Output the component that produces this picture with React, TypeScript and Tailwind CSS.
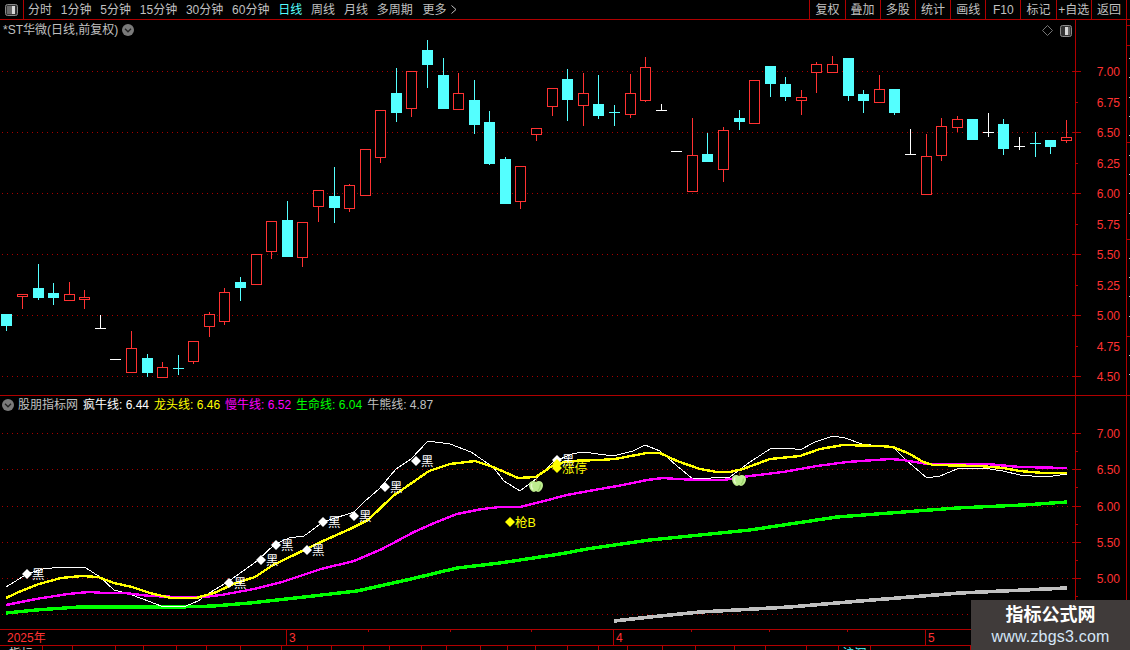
import React from "react";

type C = [number, number, number, number, number, "r" | "c" | "w"];
const candles: C[] = [
  [6, 314, 314, 325, 331, "c"], [22, 294, 294, 296, 309, "r"], [38, 264, 288, 297, 300, "c"], [53, 283, 293, 297, 305, "c"],
  [69, 282, 294, 300, 300, "r"], [84, 290, 297, 299, 309, "r"], [100, 315, 328, 328, 328, "w"], [115, 359, 359, 359, 359, "w"],
  [131, 331, 348, 372, 372, "r"], [147, 354, 358, 372, 377, "c"], [162, 362, 367, 377, 377, "r"], [178, 355, 368, 368, 375, "c"],
  [193, 341, 341, 361, 364, "r"], [209, 312, 314, 326, 337, "r"], [224, 288, 292, 321, 325, "r"], [240, 277, 282, 287, 301, "c"],
  [256, 254, 254, 284, 284, "r"], [271, 221, 221, 251, 259, "r"], [287, 201, 220, 256, 256, "c"], [302, 222, 222, 257, 267, "r"],
  [318, 190, 190, 206, 222, "r"], [334, 167, 196, 207, 223, "c"], [349, 184, 185, 208, 212, "r"], [365, 149, 149, 195, 195, "r"],
  [380, 110, 110, 157, 163, "r"], [396, 68, 93, 112, 122, "c"], [411, 71, 71, 108, 117, "r"], [427, 40, 50, 64, 88, "c"],
  [443, 58, 75, 108, 108, "c"], [458, 73, 93, 109, 109, "r"], [474, 80, 100, 124, 134, "c"], [489, 111, 122, 163, 165, "c"],
  [505, 157, 159, 203, 203, "c"], [520, 166, 166, 201, 209, "r"], [536, 128, 128, 134, 141, "r"], [552, 88, 88, 106, 116, "r"],
  [567, 69, 79, 99, 121, "c"], [583, 73, 93, 105, 126, "r"], [598, 75, 104, 115, 119, "c"], [614, 105, 112, 112, 126, "c"],
  [630, 74, 93, 114, 118, "r"], [645, 57, 67, 100, 102, "r"], [661, 104, 110, 110, 110, "w"], [676, 151, 151, 151, 151, "w"],
  [692, 118, 155, 191, 191, "r"], [707, 133, 154, 161, 162, "c"], [723, 127, 130, 169, 182, "r"], [739, 110, 118, 121, 130, "c"],
  [754, 80, 80, 123, 123, "r"], [770, 66, 66, 83, 97, "c"], [785, 77, 84, 96, 101, "c"], [801, 90, 97, 100, 115, "r"],
  [816, 62, 64, 72, 93, "r"], [832, 56, 64, 72, 72, "r"], [848, 58, 58, 95, 101, "c"], [863, 90, 94, 100, 113, "c"],
  [879, 75, 89, 102, 102, "r"], [894, 89, 89, 112, 115, "c"], [910, 129, 154, 154, 154, "w"], [926, 134, 156, 194, 194, "r"],
  [941, 118, 126, 155, 161, "r"], [957, 116, 119, 127, 132, "r"], [972, 119, 119, 139, 140, "c"], [988, 113, 132, 132, 137, "w"],
  [1003, 119, 124, 148, 155, "c"], [1019, 137, 146, 146, 150, "w"], [1035, 132, 143, 143, 157, "c"], [1050, 140, 140, 146, 154, "c"],
  [1066, 120, 137, 140, 143, "r"],
];

const white = "6,588 27,575 43,570 62,568 86,569 100,578 114,591 129,595 143,600 161,607 186,607 198,602 211,593 229,582 257,562 275,545 289,539 304,537 323,523 354,513 364,503 379,490 396,470 411,460 428,442 450,445 471,453 493,468 504,482 520,492 536,480 553,463 572,455 583,453 613,457 633,452 645,446 660,452 677,467 693,480 730,478 750,463 770,450 790,449 800,451 815,443 833,437 845,439 862,445 880,447 893,448 907,462 927,479 940,477 957,470 983,469 1003,472 1020,476 1043,478 1053,477 1067,475";
const yellow = "6,599 21,592 39,585 61,579 82,577 98,578 114,584 132,588 150,594 171,599 196,599 214,594 236,584 255,578 273,566 296,555 323,542 350,530 368,521 393,497 429,472 450,465 475,462 493,468 518,479 536,478 552,467 567,462 600,461 615,460 647,454 660,454 677,462 700,470 717,473 730,473 743,470 770,460 800,457 820,450 843,446 880,447 893,448 910,455 923,463 933,466 980,467 1003,469 1020,472 1043,474 1067,474";
const magenta = "6,606 36,600 68,595 89,593 104,594 125,594 150,597 179,598 204,598 221,596 254,590 282,583 321,570 354,562 382,550 414,533 432,525 457,515 482,510 500,508 520,508 540,503 567,496 600,490 623,486 647,481 663,479 677,480 700,481 723,481 750,477 783,473 817,467 847,463 890,460 903,461 927,465 987,465 1020,468 1067,469";
const green = "6,614 36,611 79,608 179,608 214,607 250,604 304,598 357,592 411,580 457,569 500,564 560,555 587,550 650,541 700,536 750,531 790,525 837,518 890,514 957,509 1023,506 1067,503";
const gray = "614,622 650,618 700,613 790,608 860,602 960,594 1067,589";

const blackMarks: [number, number][] = [[27, 575], [229, 584], [261, 561], [276, 546], [307, 551], [323, 523], [354, 517], [385, 488], [416, 462], [557, 461]];
const upperLabels: [string, number, boolean][] = [
  ["7.00", 71, true], ["6.75", 102, false], ["6.50", 132, true], ["6.25", 163, false], ["6.00", 193, true], ["5.75", 224, false],
  ["5.50", 254, true], ["5.25", 285, false], ["5.00", 315, true], ["4.75", 346, false], ["4.50", 376, true],
];
const lowerLabels: [string, number][] = [["7.00", 434], ["6.50", 470], ["6.00", 507], ["5.50", 543], ["5.00", 579]];
const lowerMinor = [452, 488, 525, 561, 597];

const periods: [string, boolean][] = [["分时", false], ["1分钟", false], ["5分钟", false], ["15分钟", false], ["30分钟", false], ["60分钟", false], ["日线", true], ["周线", false], ["月线", false], ["多周期", false]];
const actions = ["复权", "叠加", "多股", "统计", "画线", "F10", "标记", "+自选", "返回"];
const tabEdges = [43, 73, 116, 144, 177, 207, 241, 282, 308, 332, 364, 390, 422, 447, 481, 508, 536, 568, 599, 628, 663, 696, 735, 766, 807, 839, 871, 971];

function Candle({ c }: { c: C }) {
  const [x, h, t, b, l, k] = c;
  const color = k === "r" ? "#ff3232" : k === "c" ? "#54ffff" : "#ffffff";
  const flat = b - t < 1;
  return (
    <g stroke={color} strokeWidth={1} shapeRendering="crispEdges">
      {h < t && <line x1={x + 0.5} x2={x + 0.5} y1={h} y2={t} />}
      {l > b && <line x1={x + 0.5} x2={x + 0.5} y1={b} y2={l} />}
      {flat ? (
        <line x1={x - 5} x2={x + 6} y1={t + 0.5} y2={t + 0.5} />
      ) : (
        <rect x={x - 5 + 0.5} y={t + 0.5} width={10} height={b - t} fill={k === "r" ? "#000" : color} />
      )}
    </g>
  );
}

function Grid({ ys }: { ys: number[] }) {
  return (
    <g stroke="#a80000" strokeWidth={1} strokeDasharray="1 4" shapeRendering="crispEdges">
      {ys.map((y) => (
        <line key={y} x1={2} x2={1074} y1={y + 0.5} y2={y + 0.5} />
      ))}
    </g>
  );
}

function Chevron({ className }: { className: string }) {
  return (
    <svg width="12" height="12" viewBox="0 0 12 12" className={className}>
      <circle cx="6" cy="6" r="6" fill="#7a7a7a" />
      <path d="M3 4.8 L6 7.8 L9 4.8" stroke="#222" strokeWidth="1.3" fill="none" />
    </svg>
  );
}

function Apple({ x, y }: { x: number; y: number }) {
  return (
    <g transform={`translate(${x} ${y})`}>
      <path d="M0 -4 C-2 -6 -7 -5.5 -7 -1 C-7 3 -4 6 -2 6 C-1 6 -0.5 5.3 0 5.3 C0.5 5.3 1 6 2 6 C4 6 7 3 7 -1 C7 -5.5 2 -6 0 -4 Z" fill="#bdec8e" />
      <path d="M-4 -2.5 C-5 -0.5 -4.5 2 -3 3.5" stroke="#e2f8c8" strokeWidth="1.5" fill="none" />
      <path d="M4.5 -1.5 C4.5 1 3.5 3 2 4.5" stroke="#9ad06a" strokeWidth="1.2" fill="none" />
      <path d="M0 -4 L1 -8" stroke="#7a5a20" strokeWidth="1" />
    </g>
  );
}

function Mark({ x, y, label, color }: { x: number; y: number; label: string; color: string }) {
  return (
    <g>
      <path d={`M${x} ${y - 5} L${x + 5} ${y} L${x} ${y + 5} L${x - 5} ${y} Z`} fill={color} />
      <text x={x + 5} y={y + 5} fontSize="12.5" fill={color}>{label}</text>
    </g>
  );
}

export default function App() {
  return (
    <div className="relative flex h-[650px] w-[1130px] flex-col overflow-hidden bg-black font-['Liberation_Sans','Noto_Sans_CJK_SC',sans-serif] text-[12px] text-[#c0c0c0]">
      {/* toolbar */}
      <div className="flex h-[20px] shrink-0 items-center border-b border-[#b00000]">
        <div className="flex h-full w-[24px] items-center justify-center border-r border-[#b00000]">
          <svg width="13" height="12" viewBox="0 0 13 12">
            <rect x="0.5" y="0.5" width="12" height="11" rx="2" fill="#333" stroke="#8a8a8a" />
            <rect x="2" y="2" width="5" height="8" fill="#6a6a6a" />
            <rect x="7" y="2" width="3" height="8" fill="#d8d8d8" />
          </svg>
        </div>
        <div className="ml-[4px] flex items-center gap-[8.8px]">
          {periods.map(([p, on]) => (
            <span key={p} className={on ? "text-[#54ffff]" : ""}>{p}</span>
          ))}
          <span className="ml-[1px] flex items-center gap-[4px]">更多
            <svg width="6" height="9" viewBox="0 0 6 9"><path d="M0.5 0.5 L5 4.5 L0.5 8.5" stroke="#c0c0c0" fill="none" /></svg>
          </span>
        </div>
        <div className="ml-auto flex h-full">
          {actions.map((a) => (
            <div key={a} className="flex h-full w-[35.2px] items-center justify-center whitespace-nowrap border-l border-[#b00000]">{a}</div>
          ))}
        </div>
        <div className="h-full w-[4px] border-l border-[#b00000]" />
      </div>

      {/* upper panel */}
      <div className="relative h-[376px] shrink-0 border-b border-[#b00000]">
        <svg width="1130" height="376" viewBox="0 20 1130 376" className="block">
          <Grid ys={[71, 132, 193, 254, 315, 376]} />
          {candles.map((c) => <Candle key={c[0]} c={c} />)}
          <g stroke="#b00000" strokeWidth={1} shapeRendering="crispEdges">
            <line x1={1075.5} x2={1075.5} y1={20} y2={396} />
            <line x1={1126.5} x2={1126.5} y1={20} y2={396} />
            {upperLabels.map(([s, y, major]) => (
              <line key={s} x1={major ? 1073 : 1076} x2={major ? 1081 : 1078} y1={y + 0.5} y2={y + 0.5} />
            ))}
            {[25, 45, 142, 239, 336].map((y) => <line key={y} x1={1126} x2={1130} y1={y + 0.5} y2={y + 0.5} />)}
          </g>
          <g fill="#c8c8c8" shapeRendering="crispEdges">
            {[58, 77, 97, 116, 135, 155, 174, 193, 213, 258, 277, 296, 316, 355, 374].map((y) => <rect key={y} x={1129} y={y} width={1} height={1} />)}
          </g>
          {upperLabels.map(([s, y]) => (
            <text key={s} x={1120} y={y + 5} textAnchor="end" fontSize="12" fill="#ff3232">{s}</text>
          ))}
          <path d="M1047.5 25.5 L1052.5 30.5 L1047.5 35.5 L1042.5 30.5 Z" fill="none" stroke="#777" />
          <rect x="1060.5" y="25.5" width="11" height="11" rx="2" fill="#333" stroke="#8a8a8a" />
          <rect x="1065" y="27" width="3" height="8" fill="#d8d8d8" />
          <rect x="1068" y="27" width="2" height="8" fill="#666" />
        </svg>
        <div className="absolute left-[3px] top-0 flex h-[20px] items-center gap-[4px]">
          <span>*ST华微(日线,前复权)</span>
          <Chevron className="" />
        </div>
      </div>

      {/* lower panel */}
      <div className="relative h-[233px] shrink-0">
        <svg width="1130" height="233" viewBox="0 397 1130 233" className="block">
          <Grid ys={[434, 470, 507, 543, 579, 615]} />
          <polyline points={gray} fill="none" stroke="#c0c0c0" strokeWidth="3.6" shapeRendering="crispEdges" />
          <polyline points={green} fill="none" stroke="#00ff00" strokeWidth="3.4" shapeRendering="crispEdges" />
          <polyline points={white} fill="none" stroke="#ffffff" strokeWidth="1" shapeRendering="crispEdges" />
          <polyline points={magenta} fill="none" stroke="#ff00ff" strokeWidth="2.4" shapeRendering="crispEdges" />
          <polyline points={yellow} fill="none" stroke="#ffff00" strokeWidth="2.4" shapeRendering="crispEdges" />
          {blackMarks.map(([x, y]) => <Mark key={x} x={x} y={y} label="黑" color="#ffffff" />)}
          <path d="M557 460 L562 465 L557 470 L552 465 Z" fill="#ffff00" />
          <Mark x={557} y={469} label="涨停" color="#ffff00" />
          <Mark x={510} y={523} label="枪B" color="#ffff00" />
          <Apple x={536} y={487} />
          <Apple x={739} y={481} />
          <g stroke="#b00000" strokeWidth={1} shapeRendering="crispEdges">
            <line x1={1075.5} x2={1075.5} y1={397} y2={630} />
            <line x1={1126.5} x2={1126.5} y1={397} y2={630} />
            {lowerLabels.map(([s, y]) => <line key={s} x1={1073} x2={1081} y1={y + 0.5} y2={y + 0.5} />)}
            {lowerMinor.map((y) => <line key={y} x1={1076} x2={1078} y1={y + 0.5} y2={y + 0.5} />)}
          </g>
          {lowerLabels.map(([s, y]) => (
            <text key={s} x={1120} y={y + 5} textAnchor="end" fontSize="12" fill="#ff3232">{s}</text>
          ))}
        </svg>
        <div className="absolute left-[2px] top-0 flex h-[18px] items-center gap-[5px] whitespace-nowrap">
          <Chevron className="mr-[-1px]" />
          <span>股朋指标网</span>
          <span className="text-white">疯牛线: 6.44</span>
          <span className="text-[#ffff00]">龙头线: 6.46</span>
          <span className="text-[#ff00ff]">慢牛线: 6.52</span>
          <span className="text-[#00ff00]">生命线: 6.04</span>
          <span>牛熊线: 4.87</span>
        </div>
      </div>

      {/* time axis */}
      <div className="relative flex h-[17px] shrink-0 border-y border-[#b00000] text-[#ff3232]">
        <div className="flex w-[286px] items-center pl-[7px]">2025年</div>
        <div className="flex w-[327px] items-center border-l border-[#b00000] pl-[2px]">3</div>
        <div className="flex w-[312px] items-center border-l border-[#b00000] pl-[2px]">4</div>
        <div className="flex flex-1 items-center border-l border-[#b00000] pl-[2px]">5</div>
        {[368, 450, 531, 691, 769, 847].map((x) => (
          <span key={x} className="absolute top-0 h-[2px] w-px bg-[#b00000]" style={{ left: x }} />
        ))}
      </div>

      {/* clipped tab strip */}
      <div className="flex h-[4px] overflow-hidden leading-[16px]">
        {tabEdges.map((x, i) => (
          <div
            key={x}
            className="shrink-0 border-r border-[#b00000] text-center text-[#d0d0d0]"
            style={{ width: x - (i ? tabEdges[i - 1] : 0) }}
          >
            {i === 0 ? "指标" : i === 26 ? <span className="text-[#54ffff]">沪深</span> : ""}
          </div>
        ))}
      </div>

      {/* watermark */}
      <div className="absolute bottom-0 right-0 flex h-[50px] w-[159px] flex-col items-center justify-center bg-[#403b3a]">
        <span className="text-[18px] font-bold leading-[24px] text-white">指标公式网</span>
        <span className="text-[16px] leading-[20px] tracking-[0.2px] text-[#d5e6f7]">www.zbgs3.com</span>
      </div>
    </div>
  );
}
